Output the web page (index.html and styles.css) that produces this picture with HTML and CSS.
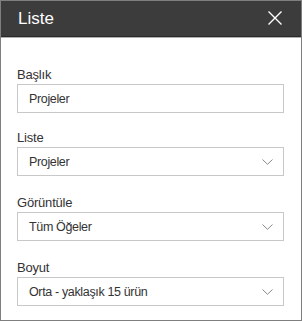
FILE: index.html
```html
<!DOCTYPE html>
<html lang="tr">

<head>
    <meta charset="UTF-8">
    <meta name="viewport" content="width=device-width, initial-scale=1.0">
    <title>Liste</title>
    <link rel="stylesheet" href="styles.css">
</head>

<body>
    <div class="panel">
        <div class="panel-header">
            <h2>Liste</h2>
            <button class="close-btn" title="Kapat">
                <svg width="14" height="14" viewBox="0 0 14 14">
                    <path d="M0.5 0.5 L13.5 13.5 M13.5 0.5 L0.5 13.5" stroke="#fff" stroke-width="1.4" fill="none" />
                </svg>
            </button>
        </div>
        <div class="panel-body">
            <div class="field field-text">
                <label for="titleInput">Başlık</label>
                <input id="titleInput" type="text" value="Projeler" />
            </div>
            <div class="field">
                <label>Liste</label>
                <div class="dropdown">
                    <span>Projeler</span>
                    <svg class="chevron" width="11" height="6" viewBox="0 0 11 6">
                        <path d="M0.5 0.5 L5.5 5.3 L10.5 0.5" stroke="#8a8a8a" stroke-width="1" fill="none" />
                    </svg>
                </div>
            </div>
            <div class="field">
                <label>Görüntüle</label>
                <div class="dropdown">
                    <span>Tüm Öğeler</span>
                    <svg class="chevron" width="11" height="6" viewBox="0 0 11 6">
                        <path d="M0.5 0.5 L5.5 5.3 L10.5 0.5" stroke="#8a8a8a" stroke-width="1" fill="none" />
                    </svg>
                </div>
            </div>
            <div class="field">
                <label>Boyut</label>
                <div class="dropdown">
                    <span>Orta - yaklaşık 15 ürün</span>
                    <svg class="chevron" width="11" height="6" viewBox="0 0 11 6">
                        <path d="M0.5 0.5 L5.5 5.3 L10.5 0.5" stroke="#8a8a8a" stroke-width="1" fill="none" />
                    </svg>
                </div>
            </div>
        </div>
    </div>
</body>

</html>
```

FILE: styles.css
```css
:root {
    --header-bg: #3c3c3c;
    --text-color: #333333;
    --border-color: #c8c8c8;
    --font-family: "Liberation Sans", Arial, sans-serif;
}

* {
    margin: 0;
    padding: 0;
    box-sizing: border-box;
}

body {
    font-family: var(--font-family);
    color: var(--text-color);
    background: #ffffff;
}

.panel {
    width: 302px;
    height: 321px;
    border: 1px solid #7f7f7f;
    background: #ffffff;
}

.panel-header {
    height: 36px;
    background: var(--header-bg);
    border-bottom: 1px solid #2a2a2a;
    display: flex;
    align-items: center;
    justify-content: space-between;
    padding: 0 19px 0 17px;
}

.panel-header h2 {
    color: #ffffff;
    font-size: 17px;
    font-weight: normal;
    margin-top: 1px;
}

.close-btn {
    background: none;
    border: none;
    width: 14px;
    height: 14px;
    display: flex;
    cursor: pointer;
    margin-top: -1px;
}

.panel-body {
    padding: 27px 17px 0 16px;
    border-top: 1px solid #b0b0b0;
}

.field {
    display: flex;
    flex-direction: column;
    margin-bottom: 17px;
}

.field-text {
    margin-bottom: 15px;
}

.field label {
    font-size: 13px;
    line-height: 19px;
    height: 19px;
    letter-spacing: -0.2px;
}

.field input,
.dropdown {
    height: 29px;
    border: 1px solid var(--border-color);
    font-family: var(--font-family);
    font-size: 12.5px;
    letter-spacing: -0.35px;
    color: var(--text-color);
    padding: 0 11px;
}

.dropdown {
    display: flex;
    align-items: center;
    justify-content: space-between;
    cursor: pointer;
}

.chevron {
    margin-right: -1px;
}
```
